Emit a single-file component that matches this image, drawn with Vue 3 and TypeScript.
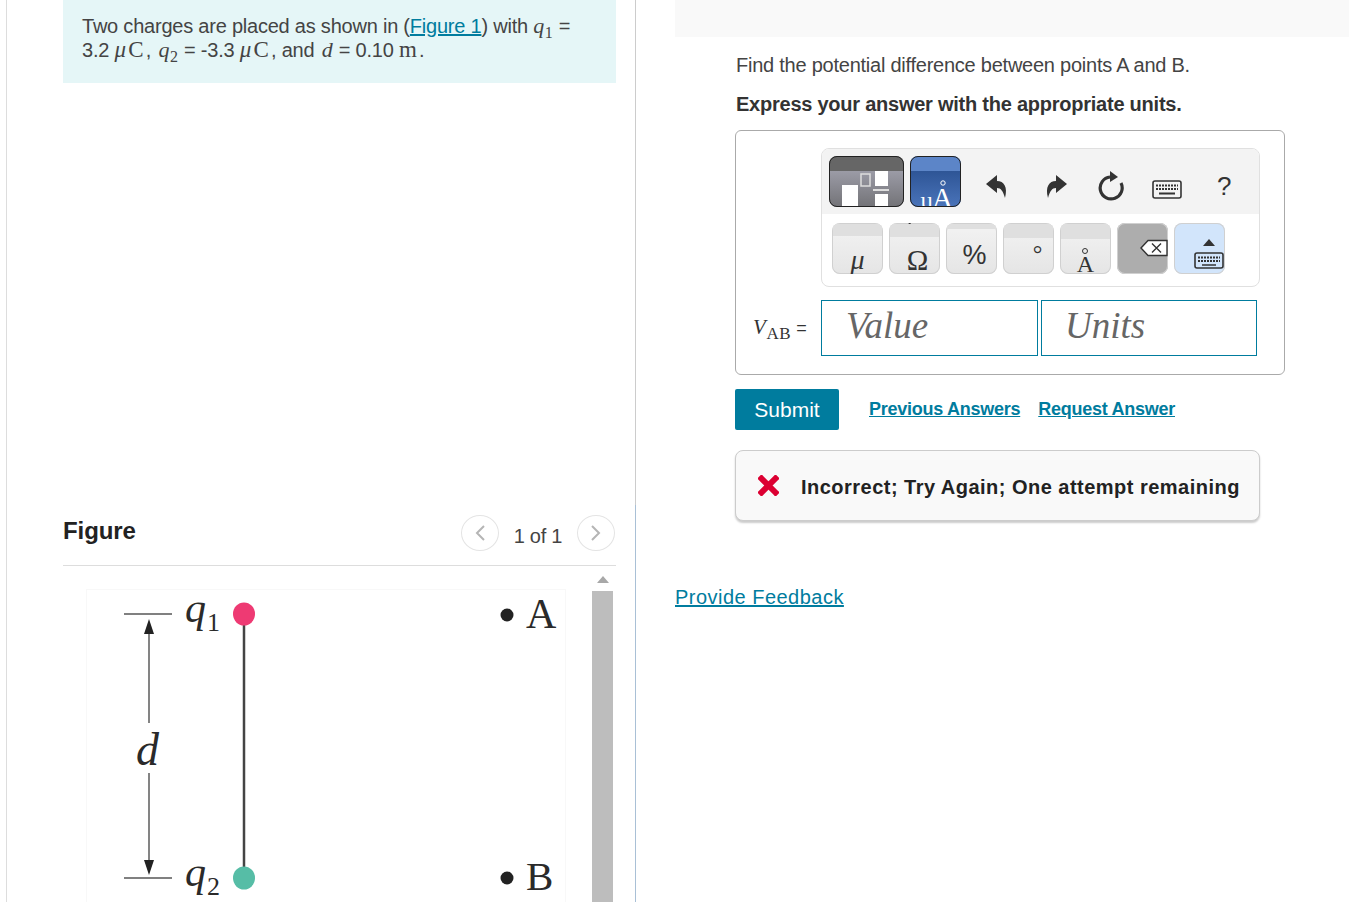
<script setup lang="ts">
interface PadKey {
  label: string
  band: number
  cls: string
}

const keys: PadKey[] = [
  { label: 'μ', band: 12, cls: 'k-mu' },
  { label: 'Ω', band: 13, cls: 'k-omega' },
  { label: '%', band: 5, cls: 'k-pct' },
  { label: '°', band: 14, cls: 'k-deg' },
  { label: 'A', band: 15, cls: 'k-ang' }
]
</script>

<template>
  <div class="page">
    <section class="left">
      <div class="prompt">
        Two charges are placed as shown in (<a class="link" href="#">Figure 1</a>) with <i class="m">q</i><sub class="m">1</sub> =
        <br />
        3.2 <span class="m u"><i>μ</i>C</span>, <i class="m gap">q</i><sub class="m">2</sub> = -3.3 <span class="m u"><i>μ</i>C</span>, and <i class="m gap">d</i> = 0.10 <span class="m u">m</span>.
      </div>

      <div class="fig-head">
        <h2>Figure</h2>
        <div class="pager">
          <span class="circle">
            <svg width="12" height="18" viewBox="0 0 12 18"><path d="M10 2 L3 9 L10 16" /></svg>
          </span>
          <span class="count">1 of 1</span>
          <span class="circle">
            <svg width="12" height="18" viewBox="0 0 12 18"><path d="M2 2 L9 9 L2 16" /></svg>
          </span>
        </div>
      </div>

      <div class="fig-body">
        <div class="fig-pic">
          <svg width="478" height="312" viewBox="87 590 478 312">
            <path d="M124 614 H172 M124 878 H172" stroke="#808080" stroke-width="2" fill="none" />
            <path d="M149 633 V723 M149 773 V860" stroke="#666" stroke-width="1.6" fill="none" />
            <path d="M149 619 L144 634 H154 Z M149 875 L144 860 H154 Z" fill="#222" />
            <path d="M244 614 V878" stroke="#444" stroke-width="2.5" />
            <ellipse cx="244" cy="614" rx="11" ry="11.5" fill="#ee3a73" />
            <ellipse cx="244" cy="878" rx="11" ry="11.5" fill="#56bda6" />
            <circle cx="507" cy="615" r="6.5" fill="#222" />
            <circle cx="507" cy="878" r="6.5" fill="#222" />
            <g class="fig-text">
              <text x="185" y="622" font-size="42" font-style="italic">q</text>
              <text x="207" y="631" font-size="26">1</text>
              <text x="185" y="886" font-size="42" font-style="italic">q</text>
              <text x="207" y="895" font-size="26">2</text>
              <text x="136" y="765" font-size="46" font-style="italic">d</text>
              <text x="526" y="628" font-size="42">A</text>
              <text x="526" y="890" font-size="41">B</text>
            </g>
          </svg>
        </div>
        <div class="scroll">
          <div class="scroll-up"></div>
          <div class="scroll-thumb"></div>
        </div>
      </div>
    </section>

    <section class="right">
      <div class="top-bar"></div>
      <div class="part">
        <p class="q">Find the potential difference between points A and B.</p>
        <p class="q bold">Express your answer with the appropriate units.</p>

        <div class="answer">
          <div class="toolbar">
            <div class="tools">
              <button class="tpl tpl-grey">
                <svg width="75" height="51" viewBox="0 0 75 51">
                  <rect x="13" y="29" width="16" height="22" fill="#fff" />
                  <rect x="32" y="18" width="9" height="12" fill="none" stroke="#ddd" stroke-width="1.5" />
                  <rect x="46" y="15" width="13" height="15" fill="#fff" />
                  <rect x="44" y="33" width="16" height="2" fill="#ddd" />
                  <rect x="46" y="38" width="13" height="13" fill="#fff" />
                </svg>
              </button>
              <button class="tpl tpl-blue">
                <svg width="51" height="51" viewBox="0 0 51 51">
                  <circle cx="33" cy="27" r="2.2" fill="none" stroke="#fff" stroke-width="1" />
                  <text x="10" y="52" font-size="23" fill="#fff" class="serif">µ</text>
                  <text x="22" y="52" font-size="29" fill="#fff" class="serif">A</text>
                </svg>
              </button>
              <svg class="tool first" width="24" height="26" viewBox="0 0 24 26">
                <path d="M1 11 L12 2 V8 C19 8 23 14 20 25 C18 18 16 15 12 15 V20 Z" fill="#333" />
              </svg>
              <svg class="tool second" width="24" height="26" viewBox="0 0 24 26">
                <path d="M23 11 L12 2 V8 C5 8 1 14 4 25 C6 18 8 15 12 15 V20 Z" fill="#333" />
              </svg>
              <svg class="tool third" width="30" height="30" viewBox="0 0 30 30">
                <path d="M14 6 A11 11 0 1 0 25 12" fill="none" stroke="#333" stroke-width="3.2" />
                <path d="M14 0 L22 6 L14 11 Z" fill="#333" />
              </svg>
              <svg class="tool fourth" width="30" height="19" viewBox="0 0 30 19">
                <rect x="1" y="1" width="28" height="17" rx="2" fill="#f3f3f3" stroke="#333" stroke-width="1.6" />
                <path d="M4 5.5 H26 M4 9 H26" stroke="#333" stroke-width="2" stroke-dasharray="2 1" />
                <path d="M7 13.5 H23" stroke="#333" stroke-width="2" />
              </svg>
              <span class="help">?</span>
            </div>
            <div class="pad">
              <button v-for="key in keys" :key="key.cls" class="key" :class="key.cls">
                <span class="band" :style="{ height: key.band + 'px' }"></span>
                <span class="glyph">{{ key.label }}</span>
              </button>
              <button class="key key-back">
                <svg width="51" height="51" viewBox="0 0 51 51">
                  <path d="M24 25 L31 17.5 H50 V32.5 H31 Z" fill="#fff" stroke="#333" stroke-width="1.4" />
                  <path d="M35 20.5 L44 29.5 M44 20.5 L35 29.5" stroke="#333" stroke-width="1.4" />
                </svg>
              </button>
              <button class="key key-kbd">
                <svg width="51" height="51" viewBox="0 0 51 51">
                  <path d="M35 16 L29 23 H41 Z" fill="#333" />
                  <rect x="21" y="30" width="28" height="15" rx="2" fill="#d2e5fb" stroke="#333" stroke-width="1.6" />
                  <path d="M24 34.5 H46 M24 38 H46" stroke="#333" stroke-width="2" stroke-dasharray="2 1" />
                  <path d="M28 42 H42" stroke="#333" stroke-width="1.6" />
                </svg>
              </button>
            </div>
          </div>

          <div class="input-row">
            <label class="v-label"><i class="m">V</i><sub class="m">AB</sub> =</label>
            <div class="field value">Value</div>
            <div class="field units">Units</div>
          </div>
        </div>

        <div class="actions">
          <button class="submit">Submit</button>
          <a class="link act" href="#">Previous Answers</a>
          <a class="link act" href="#">Request Answer</a>
        </div>

        <div class="result">
          <svg width="21" height="21" viewBox="0 0 21 21">
            <path d="M3.5 3.5 L17.5 17.5 M17.5 3.5 L3.5 17.5" stroke="#dc0032" stroke-width="6" stroke-linecap="square" />
          </svg>
          <span class="result-text">Incorrect; Try Again; One attempt remaining</span>
        </div>
      </div>
      <a class="link feedback" href="#">Provide Feedback</a>
    </section>
  </div>
</template>

<style>
html,
body {
  margin: 0;
  background: #fff;
  overflow: hidden;
}
</style>

<style scoped>
.page {
  display: flex;
  width: 1349px;
  height: 902px;
  overflow: hidden;
  font-family: "Liberation Sans", Arial, sans-serif;
  color: #333;
  background: #fff;
}
.left {
  position: relative;
  box-sizing: border-box;
  width: 630px;
  height: 902px;
  margin-left: 6px;
  padding-left: 56px;
  padding-right: 19px;
  border-left: 1px solid #ddd;
  border-right: 1px solid #ccc;
  flex-shrink: 0;
}
.left::after {
  content: "";
  position: absolute;
  right: -1px;
  top: 505px;
  bottom: 0;
  width: 1px;
  background: #a9c0d6;
}
.prompt {
  box-sizing: border-box;
  height: 83px;
  padding: 14px 19px 0;
  background: #e5f6f7;
  font-size: 20px;
  line-height: 24px;
  letter-spacing: -0.22px;
  color: #444;
}
.m {
  font-family: "Liberation Serif", serif;
  font-size: 22px;
  letter-spacing: 0.6px;
}
.u {
  font-size: 23px;
  letter-spacing: 2.2px;
}
.gap {
  margin-left: 2px;
}
sub.m {
  font-size: 16px;
  line-height: 0;
}
.link {
  color: #007c9e;
  text-decoration: underline;
}
.fig-head {
  display: flex;
  align-items: center;
  justify-content: space-between;
  height: 483px;
  box-sizing: border-box;
  padding-top: 416px;
  border-bottom: 1px solid #ddd;
}
.fig-head h2 {
  margin: 0;
  font-size: 24px;
  line-height: 28px;
  color: #222;
  position: relative;
  top: -1px;
  letter-spacing: -0.1px;
}
.pager {
  display: flex;
  align-items: center;
  gap: 15px;
  margin-right: 1px;
  position: relative;
  top: 1px;
}
.circle {
  display: flex;
  align-items: center;
  justify-content: center;
  box-sizing: border-box;
  width: 38px;
  height: 36px;
  border: 1px solid #e4e4e4;
  border-radius: 50%;
}
.circle path {
  fill: none;
  stroke: #b5b5b5;
  stroke-width: 2;
}
.count {
  position: relative;
  top: 3px;
  font-size: 20px;
  color: #444;
  letter-spacing: -0.3px;
}
.fig-body {
  display: flex;
  height: 336px;
  overflow: hidden;
}
.fig-pic {
  flex: 1;
  padding: 24px 0 0 24px;
}
.fig-pic svg {
  display: block;
  outline: 1px solid #f8f8f8;
}
.fig-text {
  font-family: "Liberation Serif", serif;
  fill: #2a2a2a;
}
.scroll {
  width: 21px;
  margin-right: 3px;
  display: flex;
  flex-direction: column;
  align-items: center;
}
.scroll-up {
  width: 0;
  height: 0;
  margin-top: 10px;
  margin-bottom: 8px;
  border-left: 6px solid transparent;
  border-right: 6px solid transparent;
  border-bottom: 7px solid #a8a8a8;
}
.scroll-thumb {
  flex: 1;
  width: 21px;
  background: #bdbdbd;
}

.right {
  flex: 1;
  padding-left: 39px;
  min-width: 0;
}
.top-bar {
  height: 37px;
  background: #f9f9f9;
}
.part {
  width: 550px;
  padding-left: 60px;
}
.q {
  margin: 0;
  padding-top: 16px;
  padding-left: 1px;
  font-size: 20px;
  line-height: 24px;
  letter-spacing: -0.24px;
  color: #444;
}
.q.bold {
  padding-top: 15px;
  font-weight: 700;
  color: #333;
}
.answer {
  box-sizing: border-box;
  height: 245px;
  margin-top: 14px;
  padding: 17px 27px 0 17px;
  border: 1px solid #aaa;
  border-radius: 6px;
}
.toolbar {
  box-sizing: border-box;
  width: 439px;
  height: 139px;
  margin-left: 68px;
  border: 1px solid #e0e0e0;
  border-radius: 8px;
  overflow: hidden;
}
.tools {
  display: flex;
  align-items: center;
  height: 65px;
  padding: 0 0 0 7px;
  background: #f3f3f3;
}
button {
  padding: 0;
  border: 0;
  font: inherit;
}
.tpl {
  display: block;
  box-sizing: border-box;
  height: 51px;
  border-radius: 8px;
  outline: 1px solid #222;
  outline-offset: -1px;
  overflow: hidden;
  flex-shrink: 0;
}
.tpl svg {
  display: block;
}
.tpl-grey {
  width: 75px;
  margin-right: 6px;
  background: linear-gradient(#666 0 15px, #9b9ba6 15px, #737377);
}
.tpl-blue {
  width: 51px;
  background: linear-gradient(#5c85c8 0 15px, #2e5596 15px, #4a74ba);
}
.serif {
  font-family: "Liberation Serif", serif;
}
.tool {
  display: block;
  flex-shrink: 0;
}
.first {
  margin-left: 24px;
  margin-top: 8px;
}
.second {
  margin-left: 35px;
  margin-top: 8px;
}
.third {
  margin-left: 28px;
  margin-top: 9px;
}
.fourth {
  margin-left: 26px;
  margin-top: 16px;
}
.help {
  margin-left: 35px;
  margin-top: 8px;
  font-size: 26px;
  color: #333;
  line-height: 30px;
}
.pad {
  display: flex;
  gap: 6px;
  padding: 9px 0 0 10px;
}
.key {
  position: relative;
  display: flex;
  justify-content: center;
  align-items: flex-end;
  box-sizing: border-box;
  width: 51px;
  height: 51px;
  border-radius: 8px;
  box-shadow: inset 0 0 0 1px #d0d0d0;
  background: linear-gradient(#f3f3f3, #e5e5e5);
  overflow: hidden;
  color: #333;
}
.band {
  position: absolute;
  left: 1px;
  right: 1px;
  top: 1px;
  background: #dfdfdf;
}
.glyph {
  position: relative;
  font-family: "Liberation Serif", serif;
  line-height: 1;
}
.k-mu .glyph {
  font-size: 28px;
  font-style: italic;
  top: 0;
}
.k-omega .glyph {
  font-size: 29px;
  left: 3px;
  top: 1px;
}
.k-pct .glyph {
  font-family: "Liberation Sans", sans-serif;
  font-size: 27px;
  left: 3px;
  top: -5px;
}
.k-deg .glyph {
  font-size: 24px;
  left: 9px;
  top: -8px;
}
.k-ang .glyph {
  font-size: 24px;
  top: 2px;
}
.k-ang::before {
  content: "";
  position: absolute;
  left: 22px;
  top: 25px;
  box-sizing: border-box;
  width: 6px;
  height: 6px;
  border: 1px solid #333;
  border-radius: 50%;
}
.k-omega::before {
  content: "";
  position: absolute;
  left: 19px;
  top: 0;
  width: 2px;
  height: 5px;
  background: #333;
  transform: skewX(-18deg);
}
.key-back {
  background: #adadad;
  display: block;
}
.key-kbd {
  background: #d2e5fb;
  display: block;
}
.key svg {
  display: block;
}
.input-row {
  display: flex;
  align-items: center;
  margin-top: 13px;
}
.v-label {
  width: 68px;
  position: relative;
  top: -1px;
  font-size: 18px;
  color: #333;
  white-space: nowrap;
}
.v-label .m {
  font-size: 21px;
}
.v-label sub.m {
  font-size: 17px;
}
.field {
  box-sizing: border-box;
  height: 56px;
  border: 1px solid #007c9e;
  font-family: "Liberation Serif", serif;
  font-style: italic;
  font-size: 37px;
  line-height: 50px;
  color: #666;
}
.value {
  width: 217px;
  padding-left: 24px;
  margin-right: 3px;
}
.units {
  width: 216px;
  padding-left: 23px;
}
.actions {
  display: flex;
  align-items: center;
  margin-top: 14px;
  height: 41px;
}
.submit {
  width: 104px;
  height: 41px;
  margin-right: 30px;
  background: #007c9e;
  color: #fff;
  font-size: 21px;
  border-radius: 2px;
}
.act {
  font-size: 18px;
  font-weight: 700;
  margin-right: 18px;
  letter-spacing: -0.26px;
}
.result {
  display: flex;
  align-items: center;
  gap: 22px;
  box-sizing: border-box;
  width: 525px;
  height: 71px;
  margin-top: 20px;
  padding-left: 22px;
  background: #f9f9f9;
  border: 1px solid #ccc;
  border-radius: 8px;
  box-shadow: 0 2px 2px #ccc;
  font-size: 20px;
  font-weight: 700;
  letter-spacing: 0.48px;
  color: #222;
  white-space: nowrap;
}
.result-text {
  padding-top: 3px;
}
.feedback {
  display: inline-block;
  margin-top: 64px;
  font-size: 20px;
  line-height: 24px;
  letter-spacing: 0.48px;
}
</style>
